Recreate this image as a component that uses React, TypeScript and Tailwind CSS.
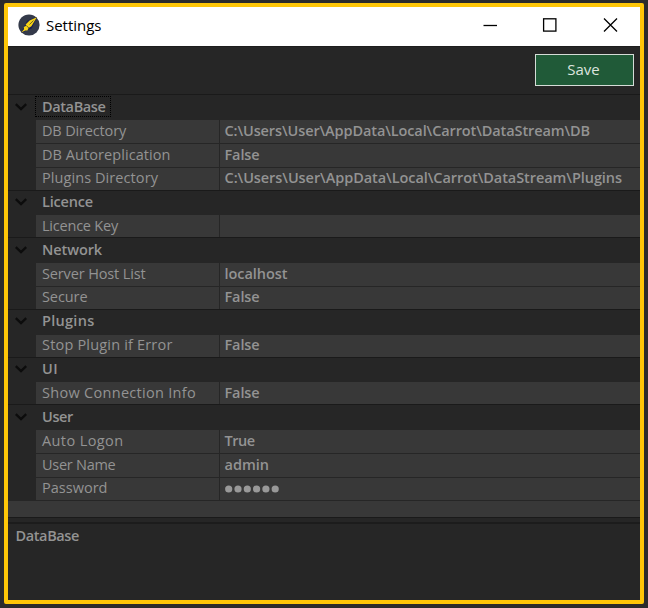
import { useLayoutEffect, useRef } from "react";

type Item = { name: string; nameWidth: number; value?: string; valueWidth?: number; masked?: boolean };
type Group = { title: string; width: number; focused?: boolean; items: Item[] };

const groups: Group[] = [
  {
    title: "DataBase",
    width: 63.5,
    focused: true,
    items: [
      { name: "DB Directory", nameWidth: 84, value: "C:\\Users\\User\\AppData\\Local\\Carrot\\DataStream\\DB", valueWidth: 365.5 },
      { name: "DB Autoreplication", nameWidth: 128.5, value: "False", valueWidth: 35 },
      { name: "Plugins Directory", nameWidth: 116, value: "C:\\Users\\User\\AppData\\Local\\Carrot\\DataStream\\Plugins", valueWidth: 397.5 },
    ],
  },
  { title: "Licence", width: 51, items: [{ name: "Licence Key", nameWidth: 76 }] },
  {
    title: "Network",
    width: 60,
    items: [
      { name: "Server Host List", nameWidth: 103.5, value: "localhost", valueWidth: 63 },
      { name: "Secure", nameWidth: 45.5, value: "False", valueWidth: 35 },
    ],
  },
  { title: "Plugins", width: 52.5, items: [{ name: "Stop Plugin if Error", nameWidth: 130.5, value: "False", valueWidth: 35 }] },
  { title: "UI", width: 16, items: [{ name: "Show Connection Info", nameWidth: 154, value: "False", valueWidth: 35 }] },
  {
    title: "User",
    width: 31,
    items: [
      { name: "Auto Logon", nameWidth: 81.5, value: "True", valueWidth: 30 },
      { name: "User Name", nameWidth: 73.5, value: "admin", valueWidth: 44.5 },
      { name: "Password", nameWidth: 65.5, masked: true },
    ],
  },
];

/* Single-line text whose tracking is adjusted to fill the given width. */
function Label({ text, width, className = "" }: { text: string; width: number; className?: string }) {
  const ref = useRef<HTMLSpanElement>(null);
  useLayoutEffect(() => {
    const el = ref.current;
    if (!el) return;
    el.style.letterSpacing = "0px";
    const natural = el.getBoundingClientRect().width;
    el.style.letterSpacing = `${(width - natural) / text.length}px`;
  }, [text, width]);
  return (
    <span ref={ref} className={`inline-block whitespace-pre ${className}`}>
      {text}
    </span>
  );
}

function Compass() {
  return (
    <svg className="mb-[3px] h-[22px] w-[22px]" viewBox="0 0 22 22">
      <circle cx="11" cy="11" r="10.6" fill="#343a4a" />
      <path d="M18.8 3 9 6.8 3 18.8 13.8 14.4Z" fill="#1b2050" />
      <path d="M18.8 3.2 11.6 6.6 7.6 10.6 8.2 11.8 5.8 13 6 15.2 3.2 18.6 7.2 16.4 9.4 16.6 10.6 14 13.4 12.2Z" fill="#f7d414" />
      <path d="m8.2 11.4 2.6 2.6M11.5 10.5l4-4" stroke="#4d4630" strokeWidth=".8" fill="none" />
    </svg>
  );
}

function TitleBar() {
  return (
    <header className="flex h-[39px] shrink-0 items-center bg-white pl-[10px] text-black">
      <Compass />
      <Label text="Settings" width={55.5} className="mb-[3px] ml-[6px] text-[15px] leading-[22px]" />
      <svg className="mb-[4px] ml-auto h-[16px] w-[158px]" viewBox="0 0 158 16" fill="none" stroke="#000">
        <path d="M1.5 8.5h13.5" strokeWidth="1.3" />
        <rect x="61.6" y="1.8" width="12.3" height="12.3" strokeWidth="1.3" />
        <path d="m122 1.5 13 13M135 1.5l-13 13" strokeWidth="1.3" />
      </svg>
    </header>
  );
}

function Chevron() {
  return (
    <svg className="h-[8px] w-[12px]" viewBox="0 0 12 8" fill="none" stroke="#0c0c0c" strokeWidth="2.4">
      <path d="m.8 1.2 5.2 4.9 5.2-4.9" />
    </svg>
  );
}

function GroupRow({ group }: { group: Group }) {
  return (
    <div className="flex h-[24.8px] items-start border-t border-[#1a1a1a] pt-px">
      <div className="flex h-[21px] w-[27px] shrink-0 items-center justify-center pr-px">
        <Chevron />
      </div>
      <div
        className={`flex h-[21px] items-center border border-dotted pr-[4.5px] pl-[6px] ${
          group.focused ? "border-black" : "border-transparent"
        }`}
      >
        <Label text={group.title} width={group.width} className="font-semibold" />
      </div>
    </div>
  );
}

function ItemRow({ item }: { item: Item }) {
  return (
    <div className="flex h-[23.86px] items-stretch last:h-[22.92px]">
      <div className="w-[28px] shrink-0" />
      <div className="flex w-[183px] shrink-0 items-center border-t border-[#262626] bg-[#383838] pb-[.9px] pl-[6px]">
        <Label text={item.name} width={item.nameWidth} />
      </div>
      <div className="flex flex-1 items-center border-t border-l border-[#262626] bg-[#383838] pb-[.9px] pl-[4.5px]">
        {item.value && item.valueWidth && <Label text={item.value} width={item.valueWidth} className="font-semibold" />}
        {item.masked && (
          <svg className="mt-px ml-[.5px] h-[8px] w-[56px]" viewBox="0 0 56 8" fill="#999">
            {[0, 1, 2, 3, 4, 5].map((i) => (
              <circle key={i} cx={3.7 + i * 9.3} cy="4" r="3.6" />
            ))}
          </svg>
        )}
      </div>
    </div>
  );
}

export default function App() {
  return (
    <div className="h-[608px] w-[648px] overflow-hidden bg-[#2c2c2c] pt-[3px] pl-[4px] font-['Open_Sans','Noto_Sans',sans-serif] text-[14.5px] leading-[20px] text-[#939393]">
      <main className="flex h-[601px] w-[640px] flex-col rounded-[2px] border-4 border-[#ffc708] bg-[#262626]">
        <TitleBar />
        <div className="flex h-[48.2px] shrink-0 justify-end border-t border-[#1d1d1d] pt-[7px] pr-[6px]">
          <button className="flex h-[32px] w-[99px] items-center justify-center border border-[#d5dcd7] bg-[#205a38] pr-[2px] pb-[2px] text-[15px] text-[#dce4df]">
            <Label text="Save" width={32.5} />
          </button>
        </div>
        <section className="shrink-0">
          {groups.map((group) => (
            <div key={group.title}>
              <GroupRow group={group} />
              {group.items.map((item) => (
                <ItemRow key={item.name} item={item} />
              ))}
            </div>
          ))}
          <div className="h-[18px] border-t border-b border-t-[#262626] border-b-[#1a1a1a] bg-[#383838]" />
        </section>
        <footer className="mt-[4px] flex-1 border-t-2 border-[#1c1c1c] pt-[2px] pl-[7.5px]">
          <Label text="DataBase" width={63.5} className="font-semibold" />
        </footer>
      </main>
    </div>
  );
}
